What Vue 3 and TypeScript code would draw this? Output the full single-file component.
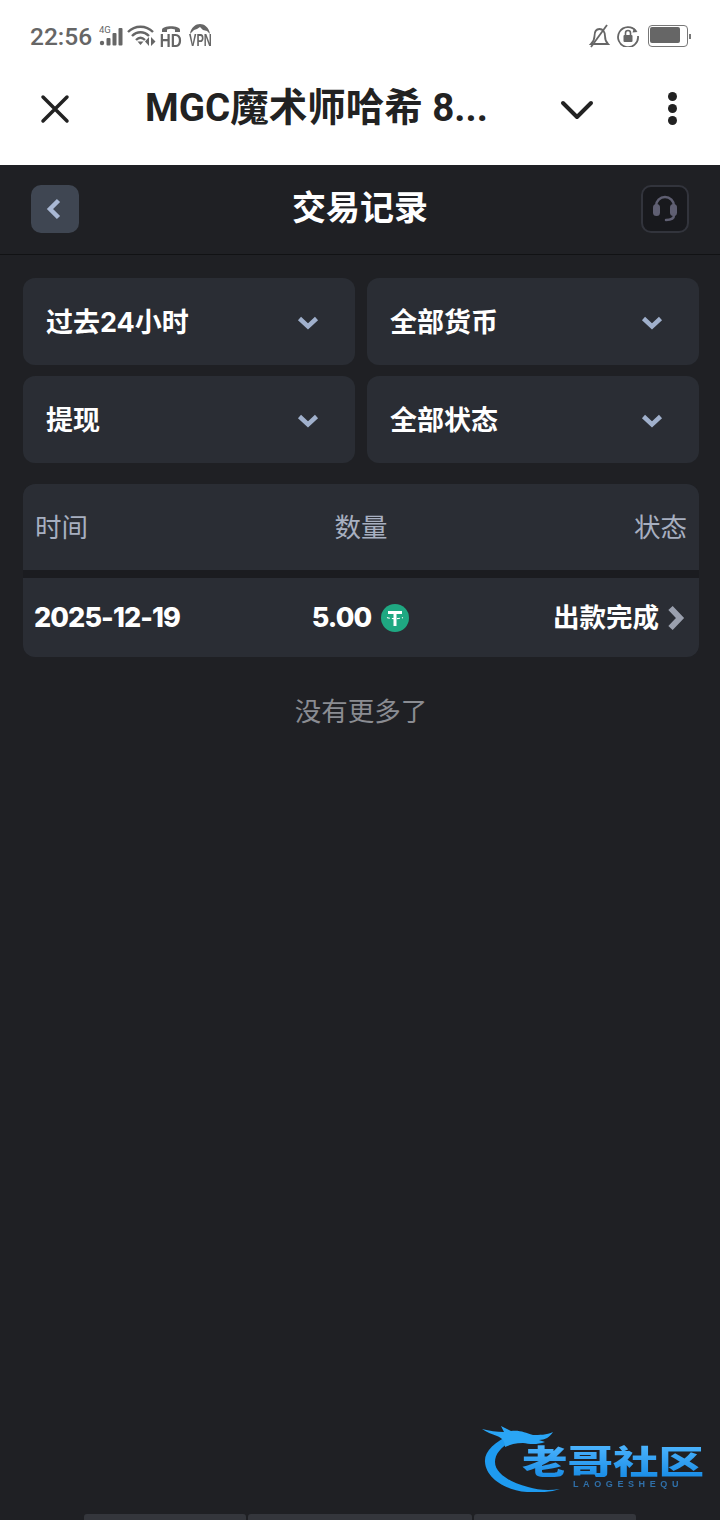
<template>
  <div class="page">
    <div class="status-bar">
      <div class="status-left">
        <span class="clock">22:56</span>
        <svg class="st-signal" width="25" height="24" viewBox="0 0 25 24">
          <text x="0" y="9" font-size="9.500" font-family="Roboto, sans-serif" fill="#666">4G</text>
          <circle cx="3" cy="19" r="2.200" fill="#666" />
          <rect x="7.500" y="14" width="4" height="7.500" rx="1" fill="#666" />
          <rect x="13.500" y="9" width="4" height="12.500" rx="1" fill="#666" />
          <rect x="19.500" y="4" width="4" height="17.500" rx="1" fill="#666" />
        </svg>
        <svg class="st-wifi" width="29" height="22" viewBox="0 0 29 22" fill="none" stroke="#666" stroke-width="2.400">
          <path d="M1 7C8 0 19 0 26 7" />
          <path d="M5 11c5-5 12-5 17 0" />
          <path d="M9 15c3-3 6-3 9 0" />
          <path d="M10.500 16.500l3 3.500 3-3.500z" fill="#666" stroke="none" />
          <path d="M22 12v9l-4-4.500zM24 12v9l4.500-4.500z" fill="#666" stroke="none" />
        </svg>
        <span class="st-hd">
          <svg width="20" height="9" viewBox="0 0 20 9" fill="none">
            <path d="M1 8V6C1 1 19 1 19 6v2h-5V5.500C11 4.500 9 4.500 6 5.500V8z" fill="#666" />
          </svg>
          <b>HD</b>
        </span>
        <span class="st-vpn">
          <svg width="22" height="10" viewBox="0 0 22 10">
            <path d="M1 10C2 3 7 0 11 0s9 3 10 10l-3-3-4-1-3-3-3 2-3 1z" fill="#666" />
          </svg>
          <b>VPN</b>
        </span>
      </div>
      <div class="status-right">
        <svg class="st-bell" width="24" height="24" viewBox="0 0 24 24" fill="none" stroke="#666" stroke-width="1.800">
          <path d="M3 20h17c-2-2-3-4-3-8 0-4-2-7-5.500-7S6.500 8 6.500 12c0 4-1.500 6-3.500 8z" />
          <path d="M3 23L19 1" />
        </svg>
        <svg width="22" height="22" viewBox="0 0 22 22" fill="none">
          <path d="M19 6A10 10 0 1 0 21 11" stroke="#666" stroke-width="1.800" />
          <path d="M17 3l3.500 4-5 .5z" fill="#666" />
          <rect x="6.500" y="10" width="9" height="7" rx="1" fill="#666" />
          <path d="M8.500 10V8a2.500 2.500 0 0 1 5 0v2" stroke="#666" stroke-width="1.600" />
        </svg>
        <span class="battery"><i></i></span>
        <span class="battery-tip"></span>
      </div>
    </div>

    <header class="browser-bar">
      <svg class="b-close" width="30" height="30" viewBox="0 0 30 30" fill="none" stroke="#222" stroke-width="3.500" stroke-linecap="round">
        <path d="M3 3l24 24M27 3L3 27" />
      </svg>
      <h1 class="b-title">MGC魔术师哈希 8...</h1>
      <svg class="b-chevron" width="34" height="20" viewBox="0 0 34 20" fill="none" stroke="#222" stroke-width="4" stroke-linecap="round" stroke-linejoin="round">
        <path d="M3 3l14 14L31 3" />
      </svg>
      <span class="b-more"><i></i><i></i><i></i></span>
    </header>

    <main class="app">
      <div class="app-bar">
        <button class="back-btn">
          <svg width="16" height="22" viewBox="0 0 16 22" fill="none" stroke="#a9b8d4" stroke-width="4.500">
            <path d="M12.500 2.500L4 11l8.500 8.500" />
          </svg>
        </button>
        <h2 class="app-title">交易记录</h2>
        <button class="support-btn">
          <svg width="26" height="28" viewBox="0 0 26 28" fill="none">
            <path d="M4 14V11a9 9 0 0 1 18 0v3" stroke="#5f5f72" stroke-width="2.500" />
            <rect x="1" y="9" width="7" height="12" rx="3.500" fill="#5f5f72" />
            <rect x="18" y="9" width="7" height="12" rx="3.500" fill="#5f5f72" />
            <path d="M22 20c0 3-3 5-8 5" stroke="#5f5f72" stroke-width="2.500" stroke-linecap="round" />
          </svg>
        </button>
      </div>

      <section class="filters">
        <div v-for="f in filters" :key="f" class="filter">
          <span>{{ f }}</span>
          <svg width="22" height="14" viewBox="0 0 22 14" fill="none" stroke="#a0b0cc" stroke-width="4.500">
            <path d="M2.500 2.500L11 10.500l8.500-8" />
          </svg>
        </div>
      </section>

      <section class="table">
        <div class="thead">
          <span>时间</span>
          <span class="col-mid">数量</span>
          <span class="col-end">状态</span>
        </div>
        <div class="tbody">
          <span class="date">2025-12-19</span>
          <span class="amount">
            5.00
            <svg width="28" height="28" viewBox="0 0 28 28">
              <circle cx="14" cy="14" r="14" fill="#1fa882" />
              <path d="M7 7h14v3h-5.500v12h-3V10H7z" fill="#fff" />
              <path d="M6 13.500c4 1.500 12 1.500 16 0" stroke="#fff" stroke-width="1.200" fill="none" stroke-dasharray="3 2" />
            </svg>
          </span>
          <span class="state">
            <span class="state-text">出款完成</span>
            <svg width="18" height="26" viewBox="0 0 18 26" fill="none" stroke="#9aa0ae" stroke-width="6">
              <path d="M3.500 3L13 13 3.500 23" />
            </svg>
          </span>
        </div>
      </section>

      <p class="no-more">没有更多了</p>

      <div class="dock">
        <span class="dock-a"></span>
        <span class="dock-b"></span>
        <span class="dock-c"></span>
      </div>

      <div class="watermark">
        <svg class="wm-dragon" width="100" height="68" viewBox="0 0 100 68">
          <path d="M30 10C12 18 2 28 3 38c1 16 20 28 42 30 12 1 24 0 33-3-12 2-22 1-32-2C30 59 13 50 13 38 13 29 20 22 34 14z" fill="#1e9bf0" />
          <path d="M0 5c8 2 14 3 22 3l-3-6 10 5c10-1 14 2 22 4 6 0 14 0 20-3-3 5-8 8-14 8l6 2c-8 3-16 2-22 1-8 0-14 2-18 4 0-6-3-9-8-11C10 10 4 8 0 5z" fill="#2aa5f5" />
        </svg>
        <span class="wm-text">老哥社区</span>
        <span class="wm-sub">LAOGESHEQU</span>
      </div>
    </main>
  </div>
</template>

<script setup lang="ts">
const filters: string[] = ['过去24小时', '全部货币', '提现', '全部状态']
</script>

<style>
html,
body {
  margin: 0;
  background: #1f2024;
}
</style>

<style scoped>
.page {
  width: 720px;
  height: 1520px;
  display: flex;
  flex-direction: column;
  overflow: hidden;
  background: #fff;
  font-family: Inter, "Noto Sans CJK SC", sans-serif;
}

.status-bar {
  height: 72px;
  flex: none;
  display: flex;
  align-items: center;
  justify-content: space-between;
  padding: 0 29px 0 30px;
  box-sizing: border-box;
  color: #666;
}

.status-left {
  display: flex;
  align-items: center;
}

.clock {
  font: 500 24.500px Roboto, sans-serif;
  margin-right: 7px;
}

.st-signal {
  margin-right: 3px;
}

.st-wifi {
  margin-right: 4px;
}

.st-hd,
.st-vpn {
  display: flex;
  flex-direction: column;
  align-items: center;
  line-height: 1;
}

.st-hd {
  margin-right: 7px;
  width: 21px;
}

.st-vpn {
  width: 24px;
}

.st-hd b,
.st-vpn b {
  font: 700 19px/15px "Liberation Sans", sans-serif;
  transform: scaleX(0.8);
}

.st-vpn b {
  font-size: 17px;
  line-height: 14px;
  transform: scaleX(0.65);
}

.status-right {
  display: flex;
  align-items: center;
  gap: 8px;
}

.st-bell {
  margin-right: -3px;
}

.battery {
  width: 36px;
  height: 18px;
  border: 1px solid #777;
  border-radius: 4px;
  padding: 1px;
  display: block;
  margin-left: 1px;
}

.battery i {
  display: block;
  width: 30px;
  height: 16px;
  background: #666;
  border-radius: 2px;
}

.battery-tip {
  width: 2px;
  height: 5px;
  background: #777;
  margin-left: -7px;
}

.browser-bar {
  height: 93px;
  flex: none;
  display: flex;
  align-items: center;
  padding: 0 0 20px 40px;
  box-sizing: border-box;
}

.b-close {
  flex: none;
}

.b-title {
  margin: 0 0 0 75px;
  padding-bottom: 10px;
  width: 400px;
  font: 700 38.500px Roboto, "Noto Sans CJK SC", sans-serif;
  color: #222;
  white-space: nowrap;
}

.b-chevron {
  margin: 3px 0 0 15px;
}

.b-more {
  margin-left: 74px;
  display: flex;
  flex-direction: column;
  gap: 3px;
}

.b-more i {
  width: 9px;
  height: 9px;
  border-radius: 50%;
  background: #222;
}

.app {
  position: relative;
  flex: 1;
  display: flex;
  flex-direction: column;
  background: #1f2024;
}

.app-bar {
  height: 90px;
  flex: none;
  display: flex;
  align-items: center;
  justify-content: space-between;
  padding: 0 31px 1px;
  border-bottom: 1px solid #111214;
  box-sizing: border-box;
}

.back-btn,
.support-btn {
  width: 48px;
  height: 48px;
  padding: 0;
  display: flex;
  align-items: center;
  justify-content: center;
  border-radius: 10px;
}

.back-btn {
  border: none;
  background: #3f4652;
  padding-right: 3px;
}

.support-btn {
  background: #18191d;
  border: 2px solid #32343c;
}

.app-title {
  margin: 0;
  padding-bottom: 7px;
  font: 700 34px "Noto Sans CJK SC", sans-serif;
  color: #fff;
}

.filters {
  display: grid;
  grid-template-columns: 1fr 1fr;
  gap: 11px 12px;
  padding: 23px 21px 0 23px;
}

.filter {
  height: 87px;
  border-radius: 12px;
  background: #2a2d34;
  display: flex;
  align-items: center;
  justify-content: space-between;
  padding: 0 36px 0 23px;
  font-size: 27px;
  font-weight: 700;
  color: #fff;
}

.filter span {
  padding-bottom: 2px;
}

.filter svg {
  margin-top: 3px;
}

.table {
  margin: 21px 21px 0 23px;
  background: #1b1c20;
  border-radius: 12px;
  overflow: hidden;
  display: flex;
  flex-direction: column;
  gap: 8px;
}

.thead,
.tbody {
  display: grid;
  grid-template-columns: 1fr 1fr 1fr;
  align-items: center;
  background: #2a2d34;
}

.thead {
  height: 86px;
  padding: 0 12px 4px;
  box-sizing: border-box;
  font-size: 26.500px;
  color: #a7afc0;
}

.col-mid {
  text-align: center;
}

.col-end {
  text-align: right;
}

.tbody {
  height: 79px;
  padding: 0 14px 0 11px;
  color: #fff;
  font-weight: 800;
  font-size: 27px;
  letter-spacing: -0.900px;
}

.amount {
  display: flex;
  align-items: center;
  justify-content: center;
  gap: 10px;
  margin-left: 2px;
  white-space: nowrap;
}

.state {
  display: flex;
  align-items: center;
  justify-content: flex-end;
  gap: 8px;
  white-space: nowrap;
}

.state-text {
  font-size: 26.500px;
  font-weight: 700;
  letter-spacing: 0;
  padding-bottom: 4px;
}

.no-more {
  margin: 35px 0 0;
  padding-left: 2px;
  text-align: center;
  font-size: 26.500px;
  line-height: 38px;
  color: #8a8c92;
}

.dock {
  margin: auto 84px 0;
  height: 6px;
  display: flex;
  gap: 2px;
}

.dock span {
  display: block;
  background: #34363c;
  border-radius: 3px 3px 0 0;
}

.dock-a {
  width: 162px;
}

.dock-b {
  width: 224px;
}

.dock-c {
  width: 162px;
}

.watermark {
  position: absolute;
  left: 482px;
  top: 1259px;
  width: 222px;
  height: 68px;
  filter: blur(0.5px);
}

.wm-dragon {
  position: absolute;
  left: 0;
  top: 0;
}

.wm-text {
  position: absolute;
  left: 40px;
  top: 19px;
  font: 900 33px/34px "Noto Sans CJK SC", sans-serif;
  background: linear-gradient(#4fb6ff, #1a8de6);
  -webkit-background-clip: text;
  background-clip: text;
  color: transparent;
  white-space: nowrap;
  transform: scaleX(1.38);
  transform-origin: left center;
}

.wm-sub {
  position: absolute;
  left: 91px;
  top: 55px;
  font: 700 9px/10px "Liberation Sans", sans-serif;
  letter-spacing: 4.600px;
  color: #2f6fa8;
}
</style>
